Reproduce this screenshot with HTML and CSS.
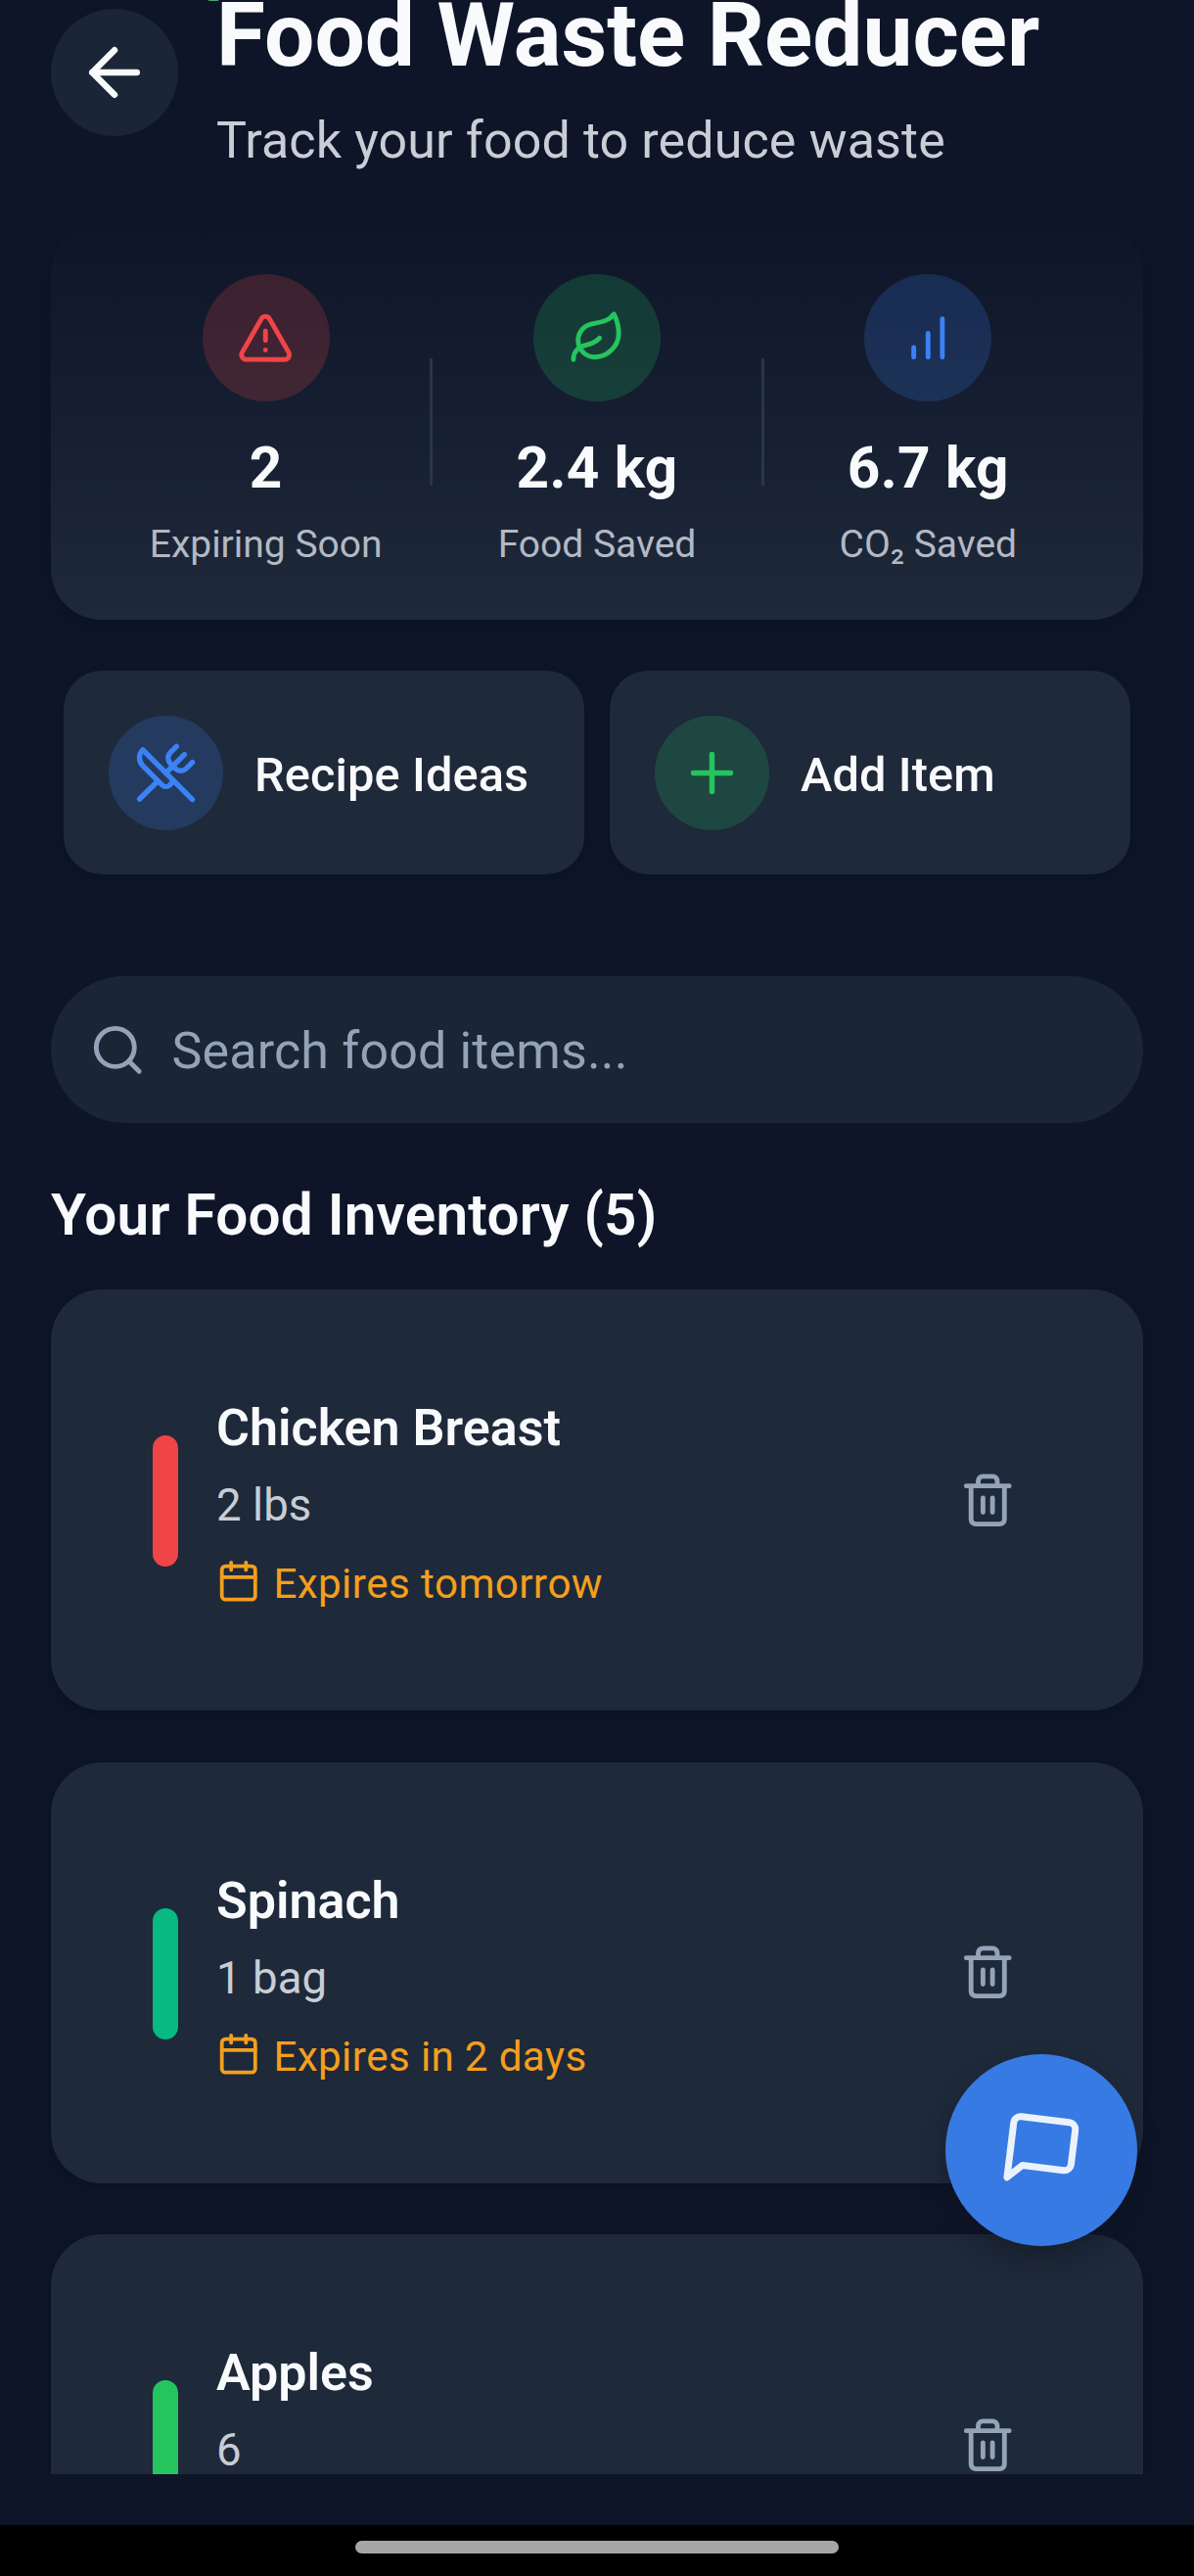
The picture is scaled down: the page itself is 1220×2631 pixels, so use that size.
FILE: index.html
```html
<!DOCTYPE html>
<html lang="en">
<head>
<meta charset="utf-8">
<title>Food Waste Reducer</title>
<link rel="stylesheet" href="styles.css">
</head>
<body>
<svg class="sprite" aria-hidden="true">
  <symbol id="trash" viewBox="0 0 24 24"><path d="M3 6h18M19 6v14a2 2 0 0 1-2 2H7a2 2 0 0 1-2-2V6M8 6V4a2 2 0 0 1 2-2h4a2 2 0 0 1 2 2v2M10 11v6M14 11v6"/></symbol>
  <symbol id="calendar" viewBox="0 0 24 24"><rect x="3" y="4" width="18" height="18" rx="2"/><path d="M16 2v4M8 2v4M3 10h18"/></symbol>
</svg>
<div class="screen">
  <main class="content">
    <header class="header">
      <button class="back" aria-label="Back"><svg class="icon icon-24" viewBox="0 0 24 24"><path d="m12 19-7-7 7-7M19 12H5"/></svg></button>
      <div class="heading">
        <h1 class="title">Food Waste Reducer</h1>
        <p class="subtitle">Track your food to reduce waste</p>
      </div>
    </header>

    <section class="stats">
      <div class="stat">
        <span class="stat-icon red"><svg class="icon icon-18" viewBox="0 0 24 24"><path d="m21.73 18-8-14a2 2 0 0 0-3.48 0l-8 14A2 2 0 0 0 4 21h16a2 2 0 0 0 1.73-3M12 9v4M12 17h.01"/></svg></span>
        <strong class="stat-value">2</strong>
        <span class="stat-label">Expiring Soon</span>
      </div>
      <i class="divider"></i>
      <div class="stat">
        <span class="stat-icon green"><svg class="icon icon-18" viewBox="0 0 24 24"><path d="M11 20A7 7 0 0 1 9.8 6.1C15.5 5 17 4.48 19 2c1 2 2 4.18 2 8 0 5.5-4.78 10-10 10Z"/><path d="M2 21c0-3 1.85-5.36 5.08-6C9.5 14.52 12 13 13 12"/></svg></span>
        <strong class="stat-value">2.4 kg</strong>
        <span class="stat-label">Food Saved</span>
      </div>
      <i class="divider"></i>
      <div class="stat">
        <span class="stat-icon blue"><svg class="icon icon-18" viewBox="0 0 24 24"><path d="M12 20V10M18 20V4M6 20v-4"/></svg></span>
        <strong class="stat-value">6.7 kg</strong>
        <span class="stat-label">CO₂ Saved</span>
      </div>
    </section>

    <section class="actions">
      <button class="action">
        <span class="action-icon blue"><svg class="icon icon-20" viewBox="0 0 24 24"><path d="m16 2-2.3 2.3a3 3 0 0 0 0 4.2l1.8 1.8a3 3 0 0 0 4.2 0L22 8"/><path d="M15 15 3.3 3.3a4.2 4.2 0 0 0 0 6l7.3 7.3c.7.7 2 .7 2.8 0L15 15Zm0 0 7 7"/><path d="m2.1 21.8 6.4-6.3M19 5l-7 7"/></svg></span>
        <span class="action-label">Recipe Ideas</span>
      </button>
      <button class="action">
        <span class="action-icon green"><svg class="icon icon-20" viewBox="0 0 24 24"><path d="M5 12h14M12 5v14"/></svg></span>
        <span class="action-label">Add Item</span>
      </button>
    </section>

    <div class="search">
      <svg class="icon icon-18" viewBox="0 0 24 24"><circle cx="11" cy="11" r="8"/><path d="m21 21-4.3-4.3"/></svg>
      <span class="placeholder">Search food items...</span>
    </div>

    <h2 class="section-title">Your Food Inventory (5)</h2>

    <div class="list">
      <article class="item">
        <i class="bar bar-red"></i>
        <div class="info">
          <h3 class="name">Chicken Breast</h3>
          <p class="qty">2 lbs</p>
          <p class="expiry"><svg class="icon icon-14"><use href="#calendar"/></svg><span>Expires tomorrow</span></p>
        </div>
        <button class="delete" aria-label="Delete"><svg class="icon icon-18"><use href="#trash"/></svg></button>
      </article>
      <article class="item">
        <i class="bar bar-teal"></i>
        <div class="info">
          <h3 class="name">Spinach</h3>
          <p class="qty">1 bag</p>
          <p class="expiry"><svg class="icon icon-14"><use href="#calendar"/></svg><span>Expires in 2 days</span></p>
        </div>
        <button class="delete" aria-label="Delete"><svg class="icon icon-18"><use href="#trash"/></svg></button>
      </article>
      <article class="item">
        <i class="bar bar-green"></i>
        <div class="info">
          <h3 class="name">Apples</h3>
          <p class="qty">6</p>
        </div>
        <button class="delete" aria-label="Delete"><svg class="icon icon-18"><use href="#trash"/></svg></button>
      </article>
    </div>
  </main>
  <footer class="nav"><i class="handle"></i></footer>
  <button class="fab" aria-label="Chat"><svg class="icon icon-26" viewBox="0 0 24 24"><path d="M21 15a2 2 0 0 1-2 2H7l-4 4V5a2 2 0 0 1 2-2h14a2 2 0 0 1 2 2z"/></svg></button>
</div>
</body>
</html>
```
FILE: styles.css
```css
* { box-sizing: border-box; margin: 0; padding: 0; }

body {
  background: #0e1528;
  font-family: Roboto, "Liberation Sans", sans-serif;
  color: #f8fafc;
}

button { background: none; border: 0; color: inherit; font: inherit; }

.sprite { display: none; }

.screen {
  position: relative;
  display: flex;
  flex-direction: column;
  justify-content: space-between;
  width: 1220px;
  height: 2631px;
  overflow: hidden;
}

.content { height: 2527px; padding: 0 52px; overflow: hidden; }

.icon {
  display: block;
  flex: none;
  fill: none;
  stroke: currentColor;
  stroke-width: 2;
  stroke-linecap: round;
  stroke-linejoin: round;
}
.icon-14 { width: 45.5px; height: 45.5px; }
.icon-18 { width: 58.5px; height: 58.5px; }
.icon-20 { width: 65px; height: 65px; }
.icon-24 { width: 78px; height: 78px; }
.icon-26 { width: 84.5px; height: 84.5px; transform: rotate(7deg); }

/* Header, scrolled partly past the top edge */
.header { display: flex; gap: 39px; height: 228px; }
.header::before {
  content: "";
  position: absolute;
  left: 211px;
  top: -12px;
  width: 14px;
  height: 13px;
  border-radius: 4px;
  background: #4fa673;
}
.back {
  display: flex;
  align-items: center;
  justify-content: center;
  width: 130px;
  height: 130px;
  margin-top: 9px;
  border-radius: 50%;
  background: #1a2536;
}
.heading { margin-top: -17px; }
.title { font-size: 91px; line-height: 107px; font-weight: 700; white-space: nowrap; }
.subtitle { margin-top: 23px; font-size: 52px; line-height: 61px; letter-spacing: .11px; color: #c8cdd6; }

/* Stats */
.stats {
  display: flex;
  align-items: center;
  height: 405px;
  padding: 52px;
  border-radius: 52px;
  background: linear-gradient(#0e1528, #1e293a);
  box-shadow: 0 6px 12px rgba(4, 8, 20, .2);
}
.stat { display: flex; flex: 1; flex-direction: column; align-items: center; padding-bottom: 2px; }
.stat-icon, .action-icon {
  display: flex;
  flex: none;
  align-items: center;
  justify-content: center;
  border-radius: 50%;
}
.stat-icon { width: 130px; height: 130px; }
.red { color: #ef4448; background: rgba(239, 68, 68, .2); }
.green { color: #26c45f; background: rgba(34, 197, 94, .2); }
.blue { color: #3b82f6; background: rgba(59, 130, 246, .2); }
.stat-value { margin-top: 34px; font-size: 58.5px; line-height: 69px; font-weight: 700; letter-spacing: .4px; }
.stat-label { margin-top: 20px; font-size: 39px; line-height: 46px; color: #b3b9c4; }
.divider { width: 3px; height: 130px; background: #2b354a; }

/* Quick actions */
.actions { display: flex; gap: 26px; margin: 52px 13px 0; }
.action {
  display: flex;
  flex: 1;
  align-items: center;
  gap: 32.5px;
  height: 208px;
  padding: 0 45.5px;
  border-radius: 39px;
  background: #1e293a;
  box-shadow: 0 3px 8px rgba(4, 8, 20, .2);
  font-size: 48.75px;
  font-weight: 500;
  white-space: nowrap;
}
.action-icon { width: 117px; height: 117px; }
.action-label { padding-top: 4px; letter-spacing: .1px; }

/* Search */
.search {
  display: flex;
  align-items: center;
  gap: 26px;
  height: 150px;
  margin-top: 104px;
  padding: 0 39px;
  border-radius: 75px;
  background: #1a2536;
  color: #94a3b8;
  font-size: 52px;
}
.placeholder { padding-top: 2px; letter-spacing: .15px; }

.section-title { margin-top: 60px; font-size: 58.5px; line-height: 69px; font-weight: 600; letter-spacing: .2px; }

/* Inventory */
.list { display: flex; flex-direction: column; gap: 52.5px; margin-top: 41px; }
.item {
  display: flex;
  flex: none;
  align-items: center;
  height: 430px;
  padding: 0 104px;
  border-radius: 52px;
  background: #1e293a;
  box-shadow: 0 4px 10px rgba(4, 8, 20, .25);
}
.bar { width: 26px; height: 134px; margin-top: 2px; border-radius: 13px; }
.bar-red { background: #ef4546; }
.bar-teal { background: #08b981; }
.bar-green { background: #24c55e; }
.info { flex: 1; align-self: flex-start; margin-left: 39px; padding-top: 111px; }
.name { font-size: 52px; line-height: 61px; font-weight: 600; }
.qty { margin-top: 22px; font-size: 45.5px; line-height: 53px; letter-spacing: .1px; color: #c8cdd6; }
.expiry {
  display: flex;
  gap: 13px;
  margin-top: 28px;
  color: #f39f1d;
  font-size: 42.25px;
  line-height: 52px;
  letter-spacing: .3px;
  font-kerning: none;
}
.delete { padding: 26px; color: #94a3b8; }

/* Floating chat button */
.fab {
  position: absolute;
  left: 966px;
  top: 2098px;
  display: flex;
  align-items: center;
  justify-content: center;
  width: 196px;
  height: 196px;
  border-radius: 50%;
  background: #387ae3;
  box-shadow: 0 13px 24px rgba(14, 18, 26, .4);
  color: #ebf2fd;
}

/* System navigation */
.nav {
  display: flex;
  justify-content: center;
  height: 52px;
  padding-top: 16px;
  background: #000;
}
.handle { width: 494px; height: 13px; border-radius: 6.5px; background: #a6a6a6; }
```
